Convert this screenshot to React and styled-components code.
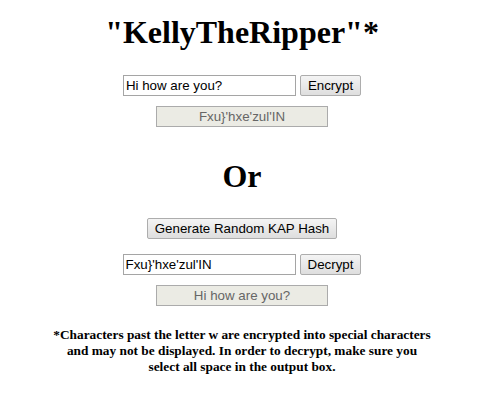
import React, { useState } from "react";
import styled, { createGlobalStyle } from "styled-components";

const Global = createGlobalStyle`
  html, body { margin: 0; padding: 0; background: #ffffff; }
  body { font-family: "Liberation Serif", "Times New Roman", serif; color: #000; }
`;

const Page = styled.main`
  display: flex;
  flex-direction: column;
  align-items: center;
  padding-top: 14px;
  text-align: center;
`;

const Heading = styled.h1`
  margin: ${(p) => p.$mt || 0}px 0 0;
  font-family: "Liberation Serif", "Times New Roman", serif;
  font-size: 32px;
  font-weight: bold;
  line-height: 36px;
`;

const Row = styled.div`
  display: flex;
  align-items: center;
  gap: 4px;
  margin-top: ${(p) => p.$mt || 0}px;
`;

const TextInput = styled.input`
  box-sizing: border-box;
  width: 173px;
  height: 21px;
  padding: 0 2px;
  border: 1px solid #a5a5a5;
  background: #fff;
  font-family: "Liberation Sans", Arial, sans-serif;
  font-size: 13.33px;
  color: #000;
  outline: none;
`;

const Button = styled.button`
  box-sizing: border-box;
  height: 21px;
  padding: 0 7px;
  margin-top: ${(p) => p.$mt || 0}px;
  border: 1px solid #adadad;
  border-radius: 2px;
  background: linear-gradient(#f4f4f4, #dedede);
  font-family: "Liberation Sans", Arial, sans-serif;
  font-size: 13.33px;
  color: #000;
  line-height: 19px;
`;

const Output = styled.div`
  box-sizing: border-box;
  width: 172px;
  height: 21px;
  margin-top: ${(p) => p.$mt || 0}px;
  border: 1px solid #ababab;
  background: #ebebe4;
  font-family: "Liberation Sans", Arial, sans-serif;
  font-size: 13.33px;
  line-height: 19px;
  color: #666666;
  text-align: center;
`;

const Note = styled.p`
  width: 382px;
  margin: 21px 0 0;
  font-family: "Liberation Serif", "Times New Roman", serif;
  font-size: 13.33px;
  font-weight: bold;
  line-height: 16px;
`;

export default function App() {
  const [plain, setPlain] = useState("Hi how are you?");
  const [cipher, setCipher] = useState("Fxu}'hxe'zul'IN");
  return (
    <>
      <Global />
      <Page>
        <Heading>"KellyTheRipper"*</Heading>
        <Row $mt={25}>
          <TextInput value={plain} onChange={(e) => setPlain(e.target.value)} />
          <Button>Encrypt</Button>
        </Row>
        <Output $mt={10}>Fxu}'hxe'zul'IN</Output>
        <Heading $mt={31}>Or</Heading>
        <Button $mt={24}>Generate Random KAP Hash</Button>
        <Row $mt={15}>
          <TextInput value={cipher} onChange={(e) => setCipher(e.target.value)} />
          <Button>Decrypt</Button>
        </Row>
        <Output $mt={10}>Hi how are you?</Output>
        <Note>
          *Characters past the letter w are encrypted into special characters and
          may not be displayed. In order to decrypt, make sure you select all space
          in the output box.
        </Note>
      </Page>
    </>
  );
}
